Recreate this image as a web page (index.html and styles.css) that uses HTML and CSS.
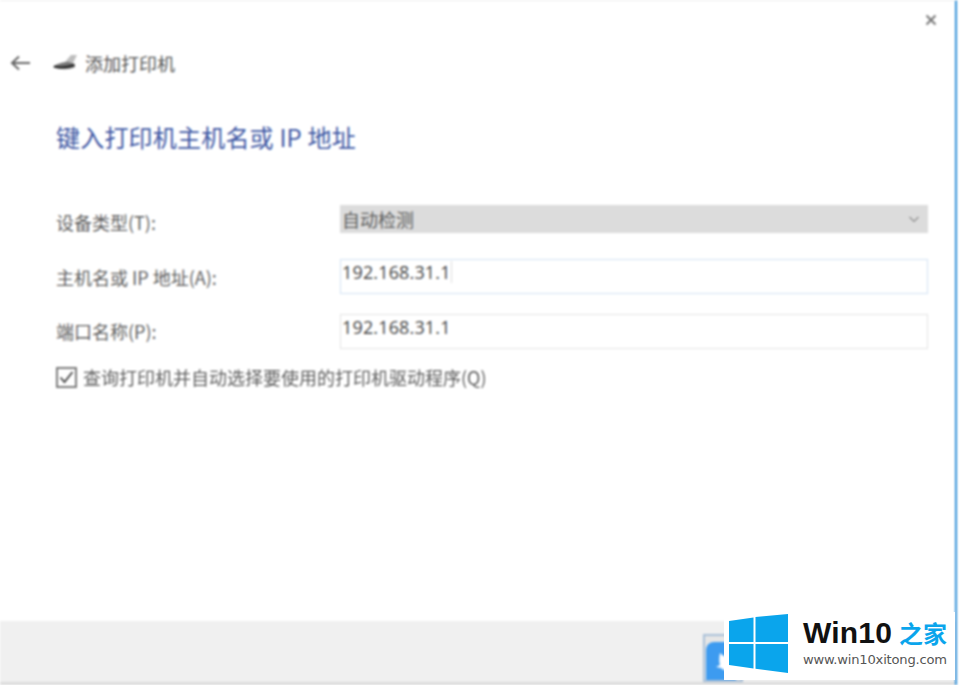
FILE: index.html
```html
<!DOCTYPE html>
<html lang="zh">
<head>
<meta charset="utf-8">
<title>添加打印机</title>
<link rel="stylesheet" href="styles.css">
</head>
<body>
<div class="window">
  <div class="main">
    <div class="titlebar">
      <svg class="close" width="12" height="12" viewBox="0 0 12 12"><path d="M1.500 1.500l9 9M10.500 1.500l-9 9" stroke="#777" stroke-width="2" fill="none"/></svg>
    </div>
    <div class="nav">
      <svg class="back" width="22" height="16" viewBox="0 0 22 16"><path d="M20 8H2M9 1.500L2 8l7 6.500" stroke="#666" stroke-width="2" fill="none"/></svg>
      <svg class="printer" width="24" height="18" viewBox="0 0 24 18"><path d="M12 8l6-7h6l-4 8z" fill="#bdbdbd"/><path d="M0 13c3-3 9-5 16-5l6 2v3c-6 3-14 3-22 0z" fill="#777"/><path d="M1 12.500c6 1.500 13 1 20-1.500" stroke="#222" stroke-width="2" fill="none"/></svg>
      <span class="nav-title">添加打印机</span>
    </div>
    <h1 class="heading">键入打印机主机名或 IP 地址</h1>
    <div class="form">
      <div class="row row-select">
        <label class="label">设备类型(T):</label>
        <div class="select"><span>自动检测</span>
          <svg width="12" height="7" viewBox="0 0 12 7"><path d="M1.500 1l4.500 4.500L10.500 1" stroke="#8f8f8f" stroke-width="1.200" fill="none"/></svg>
        </div>
      </div>
      <div class="row row-host">
        <label class="label">主机名或 IP 地址(A):</label>
        <div class="input input-focus"><span class="value">192.168.31.1</span><span class="caret"></span></div>
      </div>
      <div class="row row-port">
        <label class="label">端口名称(P):</label>
        <div class="input"><span class="value">192.168.31.1</span></div>
      </div>
      <div class="check">
        <svg class="box" width="21" height="21" viewBox="0 0 21 21"><rect x="1" y="1" width="19" height="19" fill="#fff" stroke="#6f6f6f" stroke-width="1.800"/><path d="M4.500 10.500l4 4.500 8-10" stroke="#444" stroke-width="1.800" fill="none"/></svg>
        <span class="check-text">查询打印机并自动选择要使用的打印机驱动程序(Q)</span>
      </div>
    </div>
  </div>
  <div class="footer">
    <div class="next-btn">
      <div class="badge">
        <svg class="bird" width="18" height="38" viewBox="0 0 18 38"><path d="M9 11c3 3 6 4 9 4v13c-3 1-6 0-8-2-2 0-3-1-5-1l4-2c-1-3-1-7 0-12z" fill="#fff"/></svg>
      </div>
    </div>
  </div>
  <div class="bottom-line"></div>
</div>
<div class="watermark">
  <svg class="winlogo" width="59" height="59" viewBox="0 0 59 59"><path d="M0 7L24.500 3.500V28H0zM26.500 3.100L59 0V28H26.500zM0 30H24.500V54.500L0 51zM26.500 30H59V59L26.500 54.800z" fill="#0aa5ec"/></svg>
  <div class="wm-text">
    <div class="wm-title"><span class="wm-win">Win10</span><span class="wm-home">之家</span></div>
    <div class="wm-url">www.win10xitong.com</div>
  </div>
</div>
</body>
</html>
```

FILE: styles.css
```css
* { box-sizing: border-box; }
html, body { margin: 0; height: 100%; overflow: hidden; background: #fff; }
body { font-family: "Noto Sans CJK SC", "Liberation Sans", sans-serif; color: #555; position: relative; }
.window { width: 957px; height: 685px; display: flex; flex-direction: column; border-right: 2px solid #2f8fd8; border-top: 1px solid #eee; position: relative; filter: blur(0.8px); }
.main { flex: 1; background: #fff; padding: 0 27px 0 10px; }
.titlebar { height: 40px; display: flex; justify-content: flex-end; align-items: flex-start; padding-top: 13px; }
.close { margin-right: -9px; }
.nav { height: 44px; display: flex; align-items: center; }
.back { flex: none; }
.printer { margin-left: 21px; flex: none; }
.nav-title { margin-left: 8px; font-size: 18px; color: #555; }
.heading { margin: 36px 0 0 46px; font-size: 24px; letter-spacing: 0.2px; font-weight: 400; line-height: 32px; color: #3f58a4; }
.form { margin: 52px 0 0 46px; }
.row { display: grid; grid-template-columns: 284px 1fr; align-items: center; }
.label { font-size: 18px; color: #5f5f5f; line-height: 22px; }
.row-select .label { padding-top: 5px; }
.row-port .label { padding-bottom: 2px; }
.select { height: 28px; background: #dcdcdc; display: flex; align-items: center; justify-content: space-between; padding: 0 8px 0 2px; font-size: 18px; color: #5f5f5f; }
.row-host { margin-top: 26px; }
.row-port { margin-top: 20px; }
.input { height: 35px; background: #fff; border: 1px solid #e3e3e3; display: flex; align-items: flex-start; padding: 0 1px; font-size: 18px; letter-spacing: 0.15px; color: #444; line-height: 24px; font-family: "Open Sans", sans-serif; }
.input-focus { border-color: #d2e2f4; }
.caret { width: 1px; height: 22px; background: #ddd; margin: 1px 0 0 0; }
.check { display: flex; align-items: center; margin-top: 15px; }
.box { flex: none; }
.check-text { margin-left: 6px; font-size: 18px; color: #5f5f5f; }
.footer { height: 61px; background: #f0f0f0; position: relative; flex: none; }
.next-btn { position: absolute; left: 703px; top: 13px; width: 40px; height: 48px; border: 2px solid #a9c0d8; background: #e6e6e6; }
.badge { position: absolute; left: 1px; top: 6px; width: 30px; height: 38px; background: #3d9bf0; border-radius: 8px 0 0 0; }
.bird { display: block; margin-left: 5px; }
.bottom-line { height: 3px; background: #dcdcdc; flex: none; }
.watermark { position: absolute; left: 724px; top: 612px; width: 231px; height: 68px; background: #fff; display: flex; padding: 2px 0 0 5px; }
.winlogo { flex: none; }
.wm-text { margin-left: 15px; }
.wm-title { display: flex; align-items: center; height: 38px; }
.wm-win { font: 700 30px "Liberation Sans", sans-serif; color: #111; letter-spacing: 0.2px; }
.wm-home { font-size: 24px; font-weight: 700; color: #0aa5ec; margin-left: 7px; line-height: 34px; }
.wm-url { font: 13.100px "DejaVu Sans", sans-serif; color: #555; line-height: 16px; margin-top: 0; letter-spacing: -0.2px; }
```
